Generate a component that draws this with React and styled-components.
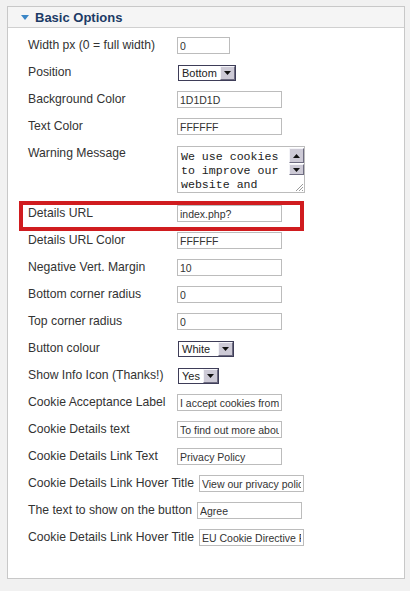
import React from "react";
import styled, { createGlobalStyle } from "styled-components";

const Global = createGlobalStyle`
  html, body { margin: 0; padding: 0; background: #f1f1f1; }
  body { font-family: "Liberation Sans", Arial, sans-serif; }
  #root { padding-top: 6px; padding-bottom: 14px; }
`;

const Panel = styled.div`
  margin-left: 7px;
  width: 396px;
  border: 1px solid #c8c8c8;
  background: #fff;
`;

const Header = styled.div`
  height: 20px;
  display: flex;
  align-items: center;
  gap: 6px;
  padding-left: 13px;
  background: #f5f5f5;
  border-bottom: 1px solid #d0d0d0;
  font-size: 13px;
  font-weight: bold;
  color: #1c3b66;
`;

const Content = styled.div`
  padding: 4px 0 27px 20px;
`;

const Row = styled.div`
  position: relative;
  display: flex;
  align-items: flex-start;
  padding: 5px 0;
  ${(p) =>
    p.$highlight &&
    `
    &::after {
      content: "";
      position: absolute;
      left: -9px;
      top: 1px;
      width: 285px;
      height: 30px;
      box-sizing: border-box;
      border: 4px solid #d01c1f;
      pointer-events: none;
    }
  `}
`;

const Label = styled.div`
  min-width: 144px;
  margin-right: 5px;
  font-size: 12.2px;
  line-height: 17px;
  color: #333;
  white-space: nowrap;
`;

const Input = styled.input`
  box-sizing: border-box;
  width: ${(p) => p.$w || 105}px;
  height: 17px;
  margin: 0;
  border: 1px solid #bcbcbc;
  border-radius: 0;
  outline: none;
  background: #fff;
  padding: 0 2px;
  font-family: "Liberation Sans", Arial, sans-serif;
  font-size: 10.5px;
  line-height: 15px;
  color: #333;
`;

const SelectBox = styled.div`
  box-sizing: border-box;
  display: flex;
  width: ${(p) => p.$w}px;
  height: 16px;
  margin: 1px 0 0 1px;
  border: 1px solid #3e3d58;
  background: #fff;
`;

const SelectText = styled.div`
  flex: 1;
  padding: 0 3px;
  font-size: 11px;
  line-height: 14px;
  color: #222;
  white-space: nowrap;
  overflow: hidden;
`;

const ArrowBtn = styled.div`
  box-sizing: border-box;
  width: ${(p) => p.$w || 15}px;
  height: ${(p) => p.$h || 14}px;
  display: flex;
  align-items: center;
  justify-content: center;
  background: #cdcad6;
  border: 1px solid;
  border-color: #f4f4f8 #6d6b80 #6d6b80 #f4f4f8;
`;

const TextArea = styled.div`
  box-sizing: border-box;
  display: flex;
  width: 128px;
  height: 47px;
  margin: 1px 0 2px;
  border: 1px solid #bcbcbc;
  background: #fff;
`;

const AreaText = styled.div`
  flex: 1;
  padding: 3px 3px 0 3px;
  font-family: "Liberation Mono", "Courier New", monospace;
  font-size: 11.6px;
  line-height: 14px;
  color: #222;
  overflow: hidden;
`;

const ScrollCol = styled.div`
  width: 15px;
  display: flex;
  flex-direction: column;
  gap: 1px;
  padding-top: 1px;
`;

const Grip = styled.div`
  margin-top: auto;
  height: 12px;
  display: flex;
  align-items: flex-end;
  justify-content: flex-end;
`;

const Arrow = ({ up }) => (
  <svg width="7" height="4" viewBox="0 0 7 4">
    <path d={up ? "M0 4 L3.5 0 L7 4 Z" : "M0 0 L7 0 L3.5 4 Z"} fill="#111" />
  </svg>
);

const Select = ({ value, w }) => (
  <SelectBox $w={w}>
    <SelectText>{value}</SelectText>
    <ArrowBtn>
      <Arrow />
    </ArrowBtn>
  </SelectBox>
);

const rows = [
  { label: "Width px (0 = full width)", type: "input", value: "0", w: 53 },
  { label: "Position", type: "select", value: "Bottom", w: 58 },
  { label: "Background Color", type: "input", value: "1D1D1D" },
  { label: "Text Color", type: "input", value: "FFFFFF" },
  { label: "Warning Message", type: "textarea" },
  { label: "Details URL", type: "input", value: "index.php?", highlight: true },
  { label: "Details URL Color", type: "input", value: "FFFFFF" },
  { label: "Negative Vert. Margin", type: "input", value: "10" },
  { label: "Bottom corner radius", type: "input", value: "0" },
  { label: "Top corner radius", type: "input", value: "0" },
  { label: "Button colour", type: "select", value: "White", w: 56 },
  { label: "Show Info Icon (Thanks!)", type: "select", value: "Yes", w: 41 },
  { label: "Cookie Acceptance Label", type: "input", value: "I accept cookies from this site" },
  { label: "Cookie Details text", type: "input", value: "To find out more about the cookies" },
  { label: "Cookie Details Link Text", type: "input", value: "Privacy Policy" },
  { label: "Cookie Details Link Hover Title", type: "input", value: "View our privacy policy page" },
  { label: "The text to show on the button", type: "input", value: "Agree" },
  { label: "Cookie Details Link Hover Title", type: "input", value: "EU Cookie Directive Plugin" },
];

const Field = ({ r }) => {
  if (r.type === "select") return <Select value={r.value} w={r.w} />;
  if (r.type === "textarea")
    return (
      <TextArea>
        <AreaText>
          We use cookies to improve our website and provide you with the best
          experience.
        </AreaText>
        <ScrollCol>
          <ArrowBtn $h={15}>
            <Arrow up />
          </ArrowBtn>
          <ArrowBtn $h={11}>
            <Arrow />
          </ArrowBtn>
          <Grip>
            <svg width="10" height="10" viewBox="0 0 10 10">
              <path d="M9 2 L2 9 M9 5 L5 9 M9 8 L8 9" stroke="#9a9a9a" strokeWidth="1" />
            </svg>
          </Grip>
        </ScrollCol>
      </TextArea>
    );
  return <Input $w={r.w} readOnly value={r.value} />;
};

export default function App() {
  return (
    <>
      <Global />
      <Panel>
        <Header>
          <svg width="8" height="5" viewBox="0 0 8 5">
            <path d="M0 0 L8 0 L4 5 Z" fill="#3b86c6" />
          </svg>
          Basic Options
        </Header>
        <Content>
          {rows.map((r, i) => (
            <Row key={i} $highlight={r.highlight}>
              <Label>{r.label}</Label>
              <Field r={r} />
            </Row>
          ))}
        </Content>
      </Panel>
    </>
  );
}
